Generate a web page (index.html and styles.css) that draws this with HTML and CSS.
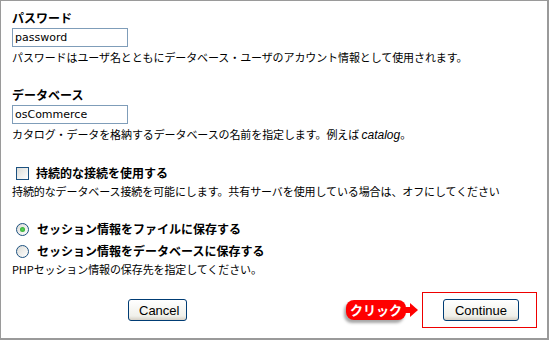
FILE: index.html
```html
<!DOCTYPE html>
<html lang="ja">
<head>
  <meta charset="UTF-8" />
  <title>データベース設定</title>
  <link rel="stylesheet" href="styles.css">
</head>
<body>

<div class="page">

  <div class="field">
    <div class="label">パスワード</div>
    <input class="text" type="text" value="password">
    <p class="note">パスワードはユーザ名とともにデータベース・ユーザのアカウント情報として使用されます。</p>
  </div>

  <div class="field">
    <div class="label">データベース</div>
    <input class="text" type="text" value="osCommerce">
    <p class="note">カタログ・データを格納するデータベースの名前を指定します。例えば <i>catalog</i>。</p>
  </div>

  <div class="field">
    <label class="choice"><input type="checkbox"> 持続的な接続を使用する</label>
    <p class="note">持続的なデータベース接続を可能にします。共有サーバを使用している場合は、オフにしてください</p>
  </div>

  <div class="field">
    <label class="choice"><input type="radio" name="session" checked> セッション情報をファイルに保存する</label>
    <label class="choice second"><input type="radio" name="session"> セッション情報をデータベースに保存する</label>
    <p class="note">PHPセッション情報の保存先を指定してください。</p>
  </div>

  <div class="buttons">
    <button class="btn cancel">Cancel</button>
    <div class="hint">
      <span class="pill">クリック</span>
      <svg class="arrow" width="16" height="14" viewBox="0 0 16 14">
        <rect x="0" y="4" width="8" height="6" fill="#f00"/>
        <polygon points="7,0 15,7 7,14" fill="#f00"/>
      </svg>
    </div>
    <div class="highlight">
      <button class="btn">Continue</button>
    </div>
  </div>

</div>

</body>
</html>
```

FILE: styles.css
```css
html, body { margin: 0; background: #fff; }

.page {
  box-sizing: border-box;
  width: 549px;
  height: 340px;
  border: 1px solid #9a9a9a;
  border-right-width: 2px;
  border-bottom-width: 2px;
  padding: 9px 10px 0 11px;
  font-family: "Noto Sans CJK JP", sans-serif;
  font-size: 11px;
  color: #000;
}

.field { margin-bottom: 23px; }

.label {
  font-weight: bold;
  font-size: 12px;
  line-height: 16px;
}

.text {
  display: block;
  box-sizing: border-box;
  width: 116px;
  height: 19px;
  margin: 2px 0 0;
  padding: 0 2px;
  border: 1px solid #7f9db9;
  font-family: "DejaVu Sans", sans-serif;
  font-size: 11px;
  color: #000;
  outline: none;
}

.note {
  margin: 3px 0 0;
  line-height: 14px;
  letter-spacing: -0.1px;
  white-space: nowrap;
}

.note i {
  font-family: "Liberation Sans", sans-serif;
  font-size: 12px;
  letter-spacing: 0;
}

.choice {
  display: flex;
  align-items: center;
  font-weight: bold;
  font-size: 12px;
  line-height: 16px;
}

.choice.second { margin-top: 6px; }

.choice input {
  appearance: none;
  box-sizing: border-box;
  width: 13px;
  height: 13px;
  margin: 0 7px 0 4px;
  border: 1px solid #1c5180;
  background: linear-gradient(135deg, #dcdcd7, #fff);
  position: relative;
}

.choice input[type="radio"] { border-radius: 50%; margin-right: 8px; }

.choice input[type="radio"]:checked::after {
  content: "";
  position: absolute;
  left: 3px;
  top: 3px;
  width: 5px;
  height: 5px;
  border-radius: 50%;
  background: radial-gradient(circle, #5fd35f, #21a121);
}

.buttons {
  display: flex;
  align-items: center;
  margin-top: -7px;
}

.btn {
  box-sizing: border-box;
  height: 22px;
  padding: 0 10px;
  border: 1px solid #003c74;
  border-radius: 3px;
  background: linear-gradient(#fff, #f0f0ea 80%, #d6d0c5);
  font-family: "Liberation Sans", sans-serif;
  font-size: 13px;
  color: #000;
}

.cancel { width: 59px; margin-left: 116px; }

.hint {
  display: flex;
  align-items: center;
  margin-left: auto;
}

.pill {
  display: inline-block;
  width: 60px;
  height: 20px;
  line-height: 20px;
  border-radius: 8px;
  background: #f00;
  color: #fff;
  font-weight: bold;
  font-size: 13px;
  text-align: center;
  box-shadow: -2px 3px 3px rgba(0, 0, 0, 0.35);
}

.arrow { margin-left: -3px; }

.highlight {
  box-sizing: border-box;
  width: 115px;
  height: 36px;
  margin-left: 3px;
  padding: 6px 0 0 20px;
  border: 1px solid #e00;
}

.highlight .btn { width: 76px; }
```
